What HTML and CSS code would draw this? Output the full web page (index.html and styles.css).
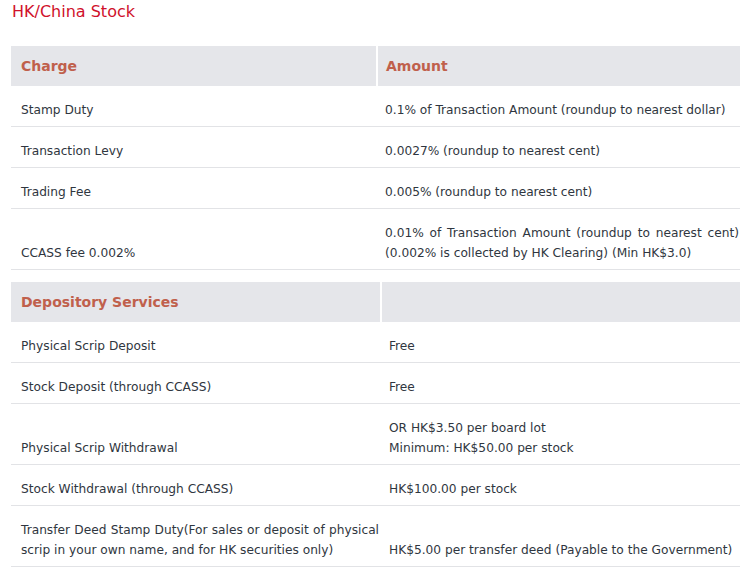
FILE: index.html
```html
<!DOCTYPE html>
<html>
<head>
<meta charset="utf-8">
<link rel="stylesheet" href="styles.css">
</head>
<body>
<div class="page">
  <h2 class="title">HK/China Stock</h2>
  <table class="fees fees-a">
    <colgroup><col class="c1"><col class="c2"></colgroup>
    <thead>
      <tr><th>Charge</th><th class="sep">Amount</th></tr>
    </thead>
    <tbody>
      <tr><td>Stamp Duty</td><td class="amt">0.1% of Transaction Amount (roundup to nearest dollar)</td></tr>
      <tr><td>Transaction Levy</td><td class="amt">0.0027% (roundup to nearest cent)</td></tr>
      <tr><td>Trading Fee</td><td class="amt">0.005% (roundup to nearest cent)</td></tr>
      <tr><td>CCASS fee 0.002%</td><td class="amt just">0.01% of Transaction Amount (roundup to nearest cent) (0.002% is collected by HK Clearing) (Min HK$3.0)</td></tr>
    </tbody>
  </table>
  <table class="fees fees-b">
    <colgroup><col class="c1"><col class="c2"></colgroup>
    <thead>
      <tr><th>Depository Services</th><th class="sep"></th></tr>
    </thead>
    <tbody>
      <tr><td>Physical Scrip Deposit</td><td class="amt">Free</td></tr>
      <tr><td>Stock Deposit (through CCASS)</td><td class="amt">Free</td></tr>
      <tr><td>Physical Scrip Withdrawal</td><td class="amt">OR HK$3.50 per board lot<br>Minimum: HK$50.00 per stock</td></tr>
      <tr><td>Stock Withdrawal (through CCASS)</td><td class="amt">HK$100.00 per stock</td></tr>
      <tr><td class="just">Transfer Deed Stamp Duty(For sales or deposit of physical scrip in your own name, and for HK securities only)</td><td class="amt">HK$5.00 per transfer deed (Payable to the Government)</td></tr>
    </tbody>
  </table>
</div>
</body>
</html>
```
FILE: styles.css
```css
html, body {
  margin: 0;
  padding: 0;
  background: #fff;
}
.page {
  padding: 0 16px 0 11px;
  font-family: "DejaVu Sans", Verdana, sans-serif;
  color: #2f3640;
}
.title {
  margin: 0;
  padding: 2px 0 0 1px;
  height: 46px;
  box-sizing: border-box;
  font-size: 16px;
  font-weight: normal;
  line-height: 20px;
  color: #d0112b;
}
.fees {
  width: 729px;
  border-collapse: collapse;
  table-layout: fixed;
  font-size: 12.2px;
  line-height: 20px;
}
.fees-a .c1 { width: 366px; }
.fees-b .c1 { width: 370px; }
.fees-b { margin-top: 12px; }
.fees th {
  background: #e5e6ea;
  color: #c0604c;
  font-size: 14px;
  font-weight: bold;
  text-align: left;
  padding: 10px 10px;
  line-height: 20px;
}
.fees th.sep {
  border-left: 2px solid #fff;
  padding-left: 8px;
}
.fees td {
  padding: 14px 2px 6px 10px;
  vertical-align: bottom;
  border-bottom: 1px solid #e2e3e6;
}
.fees td.amt {
  padding: 14px 1px 6px 8px;
}
.just {
  text-align: justify;
}
```
